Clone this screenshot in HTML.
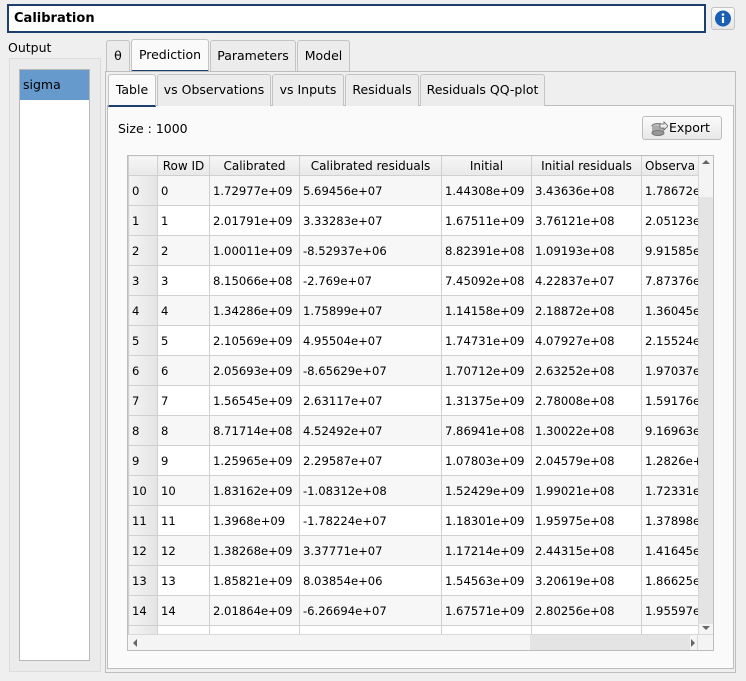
<!DOCTYPE html>
<html><head><meta charset="utf-8"><style>
*{box-sizing:border-box;margin:0;padding:0}
body{width:746px;height:681px;background:#efefef;font-family:"DejaVu Sans","Liberation Sans",sans-serif;font-size:12px;color:#000;position:relative;overflow:hidden}
.a{position:absolute}
.tab{position:absolute;border:1px solid #c4c4c4;border-bottom:none;background:#ececec;border-radius:3px 3px 0 0;text-align:center;line-height:30px;font-size:12.5px}
.tab.sel{background:#fafafa;border-bottom:2px solid #1d3f6e}
table{border-collapse:collapse;table-layout:fixed;font-size:11.6px}
td,th{border:1px solid #d0d0d0;white-space:nowrap;overflow:hidden;height:30px;padding:0 3px;text-align:left;vertical-align:middle;font-weight:normal}
th{height:20px;text-align:center;background:linear-gradient(#f6f6f6,#e8e8e8);font-size:12px}
td.vh{background:linear-gradient(90deg,#f4f4f4,#e4e4e4);padding-top:1px}
tr:nth-child(even) td{background:#f7f7f7}
tr:nth-child(even) td.vh{background:linear-gradient(90deg,#f4f4f4,#e4e4e4)}
</style></head><body>
<div class="a" style="left:7px;top:4px;width:699px;height:29px;border:2px solid #1d3f6e;background:#fff;font-weight:bold;font-size:13px;line-height:25px;padding-left:5px">Calibration</div>
<div class="a" style="left:711px;top:7px;width:24px;height:23px;border:1px solid #c4c4c4;border-radius:3px;background:linear-gradient(#fafafa,#e6e6e6)">
<svg width="22" height="21" viewBox="0 0 22 21"><circle cx="11" cy="10.5" r="8" fill="#1a5fb4"/><circle cx="11" cy="6.5" r="1.3" fill="#fff"/><rect x="9.9" y="9" width="2.2" height="6" fill="#fff"/></svg></div>
<div class="a" style="left:8px;top:40px;font-size:12.5px">Output</div>
<div class="a" style="left:9px;top:58px;width:92px;height:614px;border:1px solid #dcdcdc;background:#ebebeb"></div>
<div class="a" style="left:19px;top:69px;width:71px;height:592px;border:1px solid #b8b8b8;background:#fff"></div>
<div class="a" style="left:20px;top:70px;width:69px;height:30px;background:#6699cc;line-height:30px;padding-left:3px;font-size:12.5px">sigma</div>
<div class="tab" style="left:106px;top:40px;width:24px;height:32px">θ</div>
<div class="tab sel" style="left:131px;top:39px;width:78px;height:33px">Prediction</div>
<div class="tab" style="left:210px;top:40px;width:86px;height:32px">Parameters</div>
<div class="tab" style="left:297px;top:40px;width:53px;height:32px">Model</div>
<div class="a" style="left:105px;top:71px;width:631px;height:602px;border:1px solid #bdbdbd;background:#efefef"></div>
<div class="a" style="left:107px;top:105px;width:627px;height:564px;border:1px solid #bdbdbd;background:#fafafa"></div>
<div class="tab sel" style="left:108px;top:74px;width:48px;height:33px;background:#fafafa">Table</div>
<div class="tab" style="left:157px;top:74px;width:114px;height:32px">vs Observations</div>
<div class="tab" style="left:272px;top:74px;width:72px;height:32px">vs Inputs</div>
<div class="tab" style="left:345px;top:74px;width:74px;height:32px">Residuals</div>
<div class="tab" style="left:420px;top:74px;width:125px;height:32px">Residuals QQ-plot</div>
<div class="a" style="left:118px;top:121px;font-size:12.5px">Size : 1000</div>
<div class="a" style="left:642px;top:116px;width:80px;height:24px;border:1px solid #bdbdbd;border-radius:3px;background:linear-gradient(#fafafa,#e8e8e8);line-height:22px;font-size:12.5px;padding-left:26px">Export
<svg class="a" style="left:8px;top:4px" width="17" height="15" viewBox="0 0 17 15"><ellipse cx="7" cy="5" rx="6" ry="2.5" fill="#bbb" stroke="#777"/><rect x="1" y="5" width="12" height="7" fill="#aaa"/><ellipse cx="7" cy="12" rx="6" ry="2.5" fill="#999" stroke="#777"/><path d="M9 3h4V1l4 4-4 4V7H9z" fill="#eee" stroke="#666" stroke-width=".8"/></svg></div>
<div class="a" style="left:127px;top:155px;width:587px;height:496px;border:1px solid #bdbdbd;background:#fff;overflow:hidden">
<table style="width:570px;margin-top:-1px">
<colgroup><col style="width:29px"><col style="width:52px"><col style="width:90px"><col style="width:142px"><col style="width:90px"><col style="width:110px"><col style="width:57px"></colgroup>
<tr><th></th><th>Row ID</th><th>Calibrated</th><th>Calibrated residuals</th><th>Initial</th><th>Initial residuals</th><th style="text-align:left">Observa</th></tr>
<tr><td class="vh">0</td><td>0</td><td>1.72977e+09</td><td>5.69456e+07</td><td>1.44308e+09</td><td>3.43636e+08</td><td>1.78672e</td></tr>
<tr><td class="vh">1</td><td>1</td><td>2.01791e+09</td><td>3.33283e+07</td><td>1.67511e+09</td><td>3.76121e+08</td><td>2.05123e</td></tr>
<tr><td class="vh">2</td><td>2</td><td>1.00011e+09</td><td>-8.52937e+06</td><td>8.82391e+08</td><td>1.09193e+08</td><td>9.91585e</td></tr>
<tr><td class="vh">3</td><td>3</td><td>8.15066e+08</td><td>-2.769e+07</td><td>7.45092e+08</td><td>4.22837e+07</td><td>7.87376e</td></tr>
<tr><td class="vh">4</td><td>4</td><td>1.34286e+09</td><td>1.75899e+07</td><td>1.14158e+09</td><td>2.18872e+08</td><td>1.36045e</td></tr>
<tr><td class="vh">5</td><td>5</td><td>2.10569e+09</td><td>4.95504e+07</td><td>1.74731e+09</td><td>4.07927e+08</td><td>2.15524e</td></tr>
<tr><td class="vh">6</td><td>6</td><td>2.05693e+09</td><td>-8.65629e+07</td><td>1.70712e+09</td><td>2.63252e+08</td><td>1.97037e</td></tr>
<tr><td class="vh">7</td><td>7</td><td>1.56545e+09</td><td>2.63117e+07</td><td>1.31375e+09</td><td>2.78008e+08</td><td>1.59176e</td></tr>
<tr><td class="vh">8</td><td>8</td><td>8.71714e+08</td><td>4.52492e+07</td><td>7.86941e+08</td><td>1.30022e+08</td><td>9.16963e</td></tr>
<tr><td class="vh">9</td><td>9</td><td>1.25965e+09</td><td>2.29587e+07</td><td>1.07803e+09</td><td>2.04579e+08</td><td>1.2826e+</td></tr>
<tr><td class="vh">10</td><td>10</td><td>1.83162e+09</td><td>-1.08312e+08</td><td>1.52429e+09</td><td>1.99021e+08</td><td>1.72331e</td></tr>
<tr><td class="vh">11</td><td>11</td><td>1.3968e+09</td><td>-1.78224e+07</td><td>1.18301e+09</td><td>1.95975e+08</td><td>1.37898e</td></tr>
<tr><td class="vh">12</td><td>12</td><td>1.38268e+09</td><td>3.37771e+07</td><td>1.17214e+09</td><td>2.44315e+08</td><td>1.41645e</td></tr>
<tr><td class="vh">13</td><td>13</td><td>1.85821e+09</td><td>8.03854e+06</td><td>1.54563e+09</td><td>3.20619e+08</td><td>1.86625e</td></tr>
<tr><td class="vh">14</td><td>14</td><td>2.01864e+09</td><td>-6.26694e+07</td><td>1.67571e+09</td><td>2.80256e+08</td><td>1.95597e</td></tr>
<tr><td class="vh">15</td><td>15</td><td>1.36814e+09</td><td>5.00000e+06</td><td>1.16163e+09</td><td>1.98054e+08</td><td>1.38974e</td></tr>
</table>
<div class="a" style="left:570px;top:0;width:16px;height:478px;background:#f4f4f4;border-left:1px solid #d8d8d8"></div>
<div class="a" style="left:571px;top:41px;width:15px;height:427px;background:#e4e4e4"></div>
<div class="a" style="left:574px;top:4px;width:0;height:0;border:4px solid transparent;border-bottom-color:#666;border-top:none"></div>
<div class="a" style="left:574px;top:470px;width:0;height:0;border:4px solid transparent;border-top-color:#666;border-bottom:none"></div>
<div class="a" style="left:0;top:478px;width:586px;height:17px;background:#f4f4f4;border-top:1px solid #d8d8d8"></div>
<div class="a" style="left:402px;top:479px;width:160px;height:16px;background:#e4e4e4"></div>
<div class="a" style="left:569px;top:478px;width:17px;height:17px;border-left:1px solid #d8d8d8;border-top:1px solid #d8d8d8;background:#f4f4f4"></div>
<div class="a" style="left:5px;top:483px;width:0;height:0;border:4px solid transparent;border-right-color:#666;border-left:none"></div>
<div class="a" style="left:563px;top:483px;width:0;height:0;border:4px solid transparent;border-left-color:#666;border-right:none"></div>
</div>
</body></html>
